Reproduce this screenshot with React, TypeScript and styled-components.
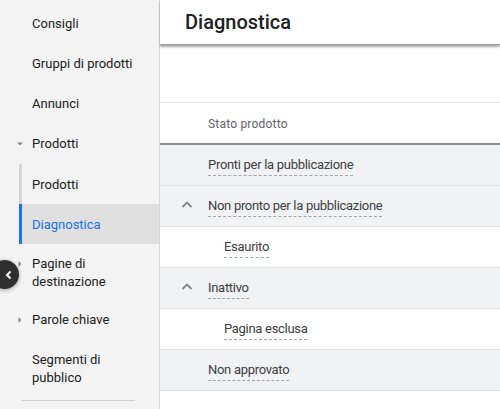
import styled, { createGlobalStyle } from "styled-components"

const GlobalStyle = createGlobalStyle`
  html, body {
    margin: 0;
    padding: 0;
  }
  body {
    font-family: Roboto, "Noto Sans", Arial, sans-serif;
    background: #ffffff;
    overflow: hidden;
  }
`

type NavEntry = {
  label: string
  caret?: "down" | "right"
}

const topItems: NavEntry[] = [
  { label: "Consigli" },
  { label: "Gruppi di prodotti" },
  { label: "Annunci" },
  { label: "Prodotti", caret: "down" },
]

const bottomItems: NavEntry[] = [
  { label: "Pagine di destinazione", caret: "right" },
  { label: "Parole chiave", caret: "right" },
  { label: "Segmenti di pubblico" },
]

type RowType = {
  label: string
  child?: boolean
  expandable?: boolean
  shaded?: boolean
}

const rows: RowType[] = [
  { label: "Pronti per la pubblicazione", shaded: true },
  { label: "Non pronto per la pubblicazione", expandable: true, shaded: true },
  { label: "Esaurito", child: true },
  { label: "Inattivo", expandable: true, shaded: true },
  { label: "Pagina esclusa", child: true },
  { label: "Non approvato", shaded: true },
]

const Caret = (props: { dir?: "down" | "right" }) => {
  if (!props.dir) return <CaretSlot />
  return (
    <CaretSlot>
      <svg width="8" height="8" viewBox="0 0 8 8">
        {props.dir === "down" ? (
          <polygon points="1,2.5 7,2.5 4,5.5" fill="#8a8a8a" />
        ) : (
          <polygon points="2.5,1 5.5,4 2.5,7" fill="#8a8a8a" />
        )}
      </svg>
    </CaretSlot>
  )
}

const ChevronUp = () => (
  <svg width="14" height="14" viewBox="0 0 14 14">
    <polyline points="2.5,9 7,4.5 11.5,9" fill="none" stroke="#80868b" strokeWidth="1.8" />
  </svg>
)

export default function App() {
  return (
    <>
      <GlobalStyle />
      <Page>
        <Sidebar>
          <NavList>
            {topItems.map((item) => (
              <NavItem key={item.label}>
                <Caret dir={item.caret} />
                <NavLabel>{item.label}</NavLabel>
              </NavItem>
            ))}
            <SubList>
              <SubItem>Prodotti</SubItem>
              <SubItem $active>Diagnostica</SubItem>
            </SubList>
            {bottomItems.map((item) => (
              <NavItem key={item.label}>
                <Caret dir={item.caret} />
                <NavLabel>{item.label}</NavLabel>
              </NavItem>
            ))}
          </NavList>
          <Divider />
        </Sidebar>
        <CollapseButton aria-label="Comprimi">
          <svg width="12" height="12" viewBox="0 0 12 12">
            <polyline points="7.5,2.5 4,6 7.5,9.5" fill="none" stroke="#ffffff" strokeWidth="2" />
          </svg>
        </CollapseButton>
        <Main>
          <Header>
            <Title>Diagnostica</Title>
          </Header>
          <Toolbar />
          <TableHead>Stato prodotto</TableHead>
          {rows.map((row) => (
            <Row key={row.label} $shaded={row.shaded} $child={row.child}>
              <ToggleSlot>{row.expandable && <ChevronUp />}</ToggleSlot>
              <RowLabel>{row.label}</RowLabel>
            </Row>
          ))}
        </Main>
      </Page>
    </>
  )
}

const Page = styled.div`
  position: relative;
  display: flex;
  width: 100%;
  height: 100vh;
  overflow: hidden;
`

const Sidebar = styled.nav`
  width: 159px;
  flex-shrink: 0;
  background-color: #f3f3f3;
  border-right: 1px solid #d9d9d9;
  padding-top: 4px;
  box-sizing: content-box;
`

const NavList = styled.div`
  display: flex;
  flex-direction: column;
`

const NavItem = styled.div`
  display: flex;
  align-items: flex-start;
  min-height: 40px;
  padding: 11px 8px 9px 16px;
  box-sizing: border-box;
  font-size: 13px;
  line-height: 18px;
  color: #212121;
`

const CaretSlot = styled.span`
  display: flex;
  width: 16px;
  height: 18px;
  align-items: center;
  flex-shrink: 0;
`

const NavLabel = styled.span`
  flex: 1;
`

const SubList = styled.div`
  display: flex;
  flex-direction: column;
  margin-left: 19px;
`

const SubItem = styled.div<{ $active?: boolean }>`
  height: 40px;
  display: flex;
  align-items: center;
  padding-left: 10px;
  border-left: 3px solid ${(p) => (p.$active ? "#1a73e8" : "#d6d6d6")};
  background-color: ${(p) => (p.$active ? "#e0e0e0" : "transparent")};
  color: ${(p) => (p.$active ? "#1a73e8" : "#212121")};
  font-size: 13px;
`

const Divider = styled.div`
  margin: 4px 24px 0 22px;
  border-top: 1px solid #cfcfcf;
`

const CollapseButton = styled.button`
  position: absolute;
  left: -10px;
  top: 260px;
  width: 29px;
  height: 29px;
  border-radius: 50%;
  border: none;
  padding: 0 0 0 8px;
  display: flex;
  align-items: center;
  justify-content: center;
  background-color: #2f2f2f;
  box-shadow: 0 1px 4px rgba(0, 0, 0, 0.35);
`

const Main = styled.main`
  flex: 1;
  display: flex;
  flex-direction: column;
  background-color: #ffffff;
`

const Header = styled.header`
  height: 44px;
  display: flex;
  align-items: center;
  padding-left: 25px;
  box-shadow: 0 2px 2px rgba(0, 0, 0, 0.35);
  border-bottom: 1px solid #9e9e9e;
  position: relative;
  z-index: 1;
`

const Title = styled.h1`
  margin: 0;
  font-size: 20px;
  font-weight: 500;
  color: #202124;
`

const Toolbar = styled.div`
  height: 57px;
  border-bottom: 1px solid #e3e3e3;
`

const TableHead = styled.div`
  height: 42px;
  display: flex;
  align-items: center;
  padding: 2px 0 0 48px;
  box-sizing: border-box;
  font-size: 12px;
  letter-spacing: 0.2px;
  color: #5f6368;
  border-bottom: 2px solid #8c8c8c;
`

const Row = styled.div<{ $shaded?: boolean; $child?: boolean }>`
  height: 41px;
  box-sizing: border-box;
  display: flex;
  align-items: center;
  padding: 3px 0 0 ${(p) => (p.$child ? "64px" : "48px")};
  background-color: ${(p) => (p.$shaded ? "#f1f2f4" : "#ffffff")};
  border-bottom: 1px solid #e0e0e0;
  position: relative;
  font-size: 13px;
  letter-spacing: -0.3px;
  color: #3c4043;
`

const ToggleSlot = styled.span`
  position: absolute;
  left: 20px;
  top: 12px;
  display: flex;
`

const RowLabel = styled.span`
  line-height: 16px;
  padding-bottom: 2px;
  border-bottom: 1px dashed #a0a4a8;
`
